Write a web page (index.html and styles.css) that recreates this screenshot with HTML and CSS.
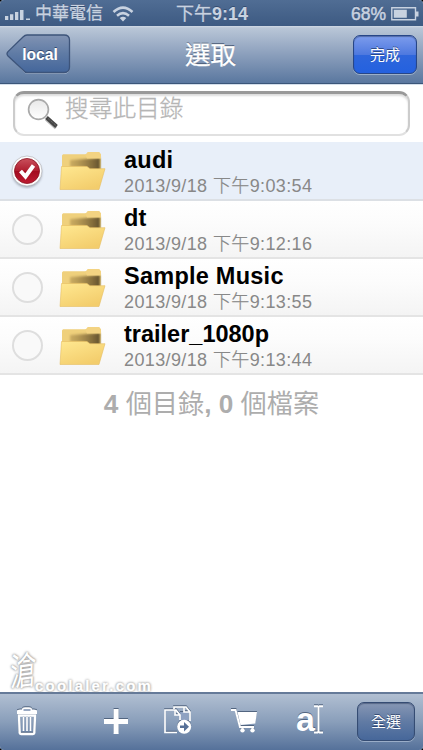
FILE: index.html
```html
<!DOCTYPE html>
<html lang="zh-Hant">
<head>
<meta charset="utf-8">
<title>選取</title>
<link rel="stylesheet" href="styles.css">
</head>
<body>
<svg class="defs" width="0" height="0">
  <defs>
    <linearGradient id="front" x1="0" y1="0" x2=".6" y2="1"><stop offset="0" stop-color="#ffe891"/><stop offset="1" stop-color="#f3cd6c"/></linearGradient>
    <linearGradient id="shade" x1="0" y1="0" x2="1" y2="0"><stop offset="0" stop-color="#a98948" stop-opacity=".5"/><stop offset="1" stop-color="#62502b"/></linearGradient>
    <linearGradient id="red" x1="0" y1="0" x2="0" y2="1"><stop offset="0" stop-color="#c9505c"/><stop offset=".48" stop-color="#b01f30"/><stop offset=".52" stop-color="#a40b20"/><stop offset="1" stop-color="#bd1c32"/></linearGradient>
    <linearGradient id="back" x1="0" y1="0" x2="0" y2="1"><stop offset="0" stop-color="#8193b3"/><stop offset=".5" stop-color="#5f7ba5"/><stop offset="1" stop-color="#44669b"/></linearGradient>
    <linearGradient id="glass" x1="0" y1="0" x2="0" y2="1"><stop offset="0" stop-color="#e8e8e8"/><stop offset="1" stop-color="#fff"/></linearGradient>
    <filter id="soft" x="-20%" y="-40%" width="140%" height="180%"><feGaussianBlur stdDeviation="1.1"/></filter>
    <symbol id="folder" viewBox="0 0 48 42">
      <path d="M3 5.5 4 4.200H27L29 2H40L42 4.500 41.500 33H3z" fill="#efd07c"/>
      <path d="M11 10 41 8V20H28L26 17H11z" fill="url(#shade)" filter="url(#soft)"/>
      <path d="M26 4.200H27L29 2H40L42 4.500V8.500H28z" fill="#f3d382"/>
      <path d="M2.500 16.500H28L31 18.700H46L40 39.500H1z" fill="url(#front)" stroke="#e5be62" stroke-width=".6"/>
    </symbol>
  </defs>
</svg>
<div class="screen">
  <header class="status">
    <div class="status-left">
      <svg width="27" height="12" viewBox="0 0 27 12"><path fill="#c8d2e0" d="M0 8h3.300v4H0zM5 6.300h3.300V12H5zM10 4h3.300v8H10zM15 2h3.500v10H15zM21 10.500h4V12h-4z"/></svg>
      <span class="carrier">中華電信</span>
      <svg class="wifi" width="22" height="16" viewBox="0 0 22 16"><g fill="none" stroke="#c8d2e0" stroke-width="2.600"><path d="M1.500 6Q11-2.600 20.500 6"/><path d="M5 9.700q6-5.200 12 0"/></g><path d="M7.700 12q3.300-2.500 6.600 0L11 15.500z" fill="#c8d2e0"/></svg>
    </div>
    <div class="clock"><span>下午</span><b>9:14</b></div>
    <div class="status-right"><span>68%</span>
      <svg width="28" height="14" viewBox="0 0 28 14"><path d="M.8.800h23.700v12H.800z" fill="none" stroke="#c8d2e0" stroke-width="1.400"/><path d="M2.800 2.800h13v8h-13zM25 4.500h2.500v5H25z" fill="#c8d2e0"/></svg>
    </div>
  </header>
  <nav class="nav">
    <a class="back">
      <svg width="66" height="42" viewBox="0 0 66 42"><path d="M17 2.500Q19 1 21 1H58Q63.500 1 63.500 6V33Q63.500 38.500 58 38.500H21Q19 38.500 17 36L3.500 22.200Q1.500 20 3.500 17.800z" fill="none" stroke="#c2cede" stroke-opacity=".55" transform="translate(0 1)"/><path d="M17 3Q19 1 21 1H58Q63.500 1 63.500 6V33Q63.500 38.500 58 38.500H21Q19 38.500 17 36L2 22Q0 19.800 2 17.600z" fill="url(#back)" stroke="#3d547a" stroke-width="1.300"/></svg>
      <span>local</span>
    </a>
    <h1>選取</h1>
    <button class="btn done">完成</button>
  </nav>
  <div class="search-wrap">
    <label class="search">
      <svg width="34" height="34" viewBox="0 0 34 34"><path d="m19 22 10 9" stroke="#bbb" stroke-width="3.500"/><path d="m19.500 20.500 10 9" stroke="#444" stroke-width="4"/><path d="m21 21.500 8 7" stroke="#777" stroke-width="1" stroke-dasharray="1 1"/><circle cx="11.500" cy="12.500" r="9.900" fill="url(#glass)" stroke="#aaa" stroke-width="1.700"/></svg>
      <span>搜尋此目錄</span>
    </label>
  </div>
  <ul class="list">
    <li class="row selected"><svg class="check" width="34" height="35" viewBox="0 0 34 35"><circle cx="17" cy="18.700" r="15" fill="#69717e" opacity=".5" filter="url(#soft)"/><circle cx="17" cy="17" r="15" fill="#fff" stroke="#b3b3b8" stroke-width=".7"/><circle cx="17" cy="17" r="12.500" fill="url(#red)" stroke="#88101f" stroke-width=".8"/><path d="m10.500 17 5 5.500 8-11" fill="none" stroke="#fff" stroke-width="4"/></svg><svg class="folder"><use href="#folder"/></svg><div class="info"><b>audi</b><span>2013/9/18 <i>下午</i>9:03:54</span></div></li>
    <li class="row"><i class="ring"></i><svg class="folder"><use href="#folder"/></svg><div class="info"><b>dt</b><span>2013/9/18 <i>下午</i>9:12:16</span></div></li>
    <li class="row"><i class="ring"></i><svg class="folder"><use href="#folder"/></svg><div class="info"><b>Sample Music</b><span>2013/9/18 <i>下午</i>9:13:55</span></div></li>
    <li class="row"><i class="ring"></i><svg class="folder"><use href="#folder"/></svg><div class="info"><b class="tight">trailer_1080p</b><span>2013/9/18 <i>下午</i>9:13:44</span></div></li>
  </ul>
  <p class="summary"><b>4</b> 個目錄<b>, 0</b> 個檔案</p>
  <footer class="toolbar">
    <svg class="icon trash" width="22" height="30" viewBox="0 0 22 30"><path d="M1 8V5Q1 3.500 4 3.500H6Q6 1.200 9 1.200H13Q16 1.200 16 3.500H18Q21 3.500 21 5V8z" fill="#fff"/><path d="M7.500 4h7" stroke="#7f93b3" stroke-width="1.600"/><path d="M3 9.500H19L18.300 27Q18.200 28 17 28H5Q3.800 28 3.700 27z" fill="none" stroke="#fff" stroke-width="2.400"/><path d="M7.500 11v14M11 11v14M14.500 11v14" stroke="#fff" stroke-width="1.700"/></svg>
    <svg class="icon plus" width="24" height="25" viewBox="0 0 24 25"><path d="M9.600 0h5v10H24v5H14.600v10h-5V15H0v-5h9.600z" fill="#fff"/></svg>
    <svg class="icon copy" width="28" height="29" viewBox="0 0 28 29"><path d="M16 6h8v8l-7 1z" fill="#8fa2c2"/><g fill="none" stroke="#fff" stroke-width="1.700"><path d="M13 26.500H1V4H12L16 9V14M11 4V9h5"/><path d="M10 3V1H22L26 6V15M20 1V6h6"/></g><circle cx="20.200" cy="20.800" r="7" fill="#fff"/><path d="M16 19.500h4v-3.500l5 4.800-5 4.700V22h-4z" fill="#577198"/></svg>
    <svg class="icon cart" width="27" height="25" viewBox="0 0 27 25"><path d="M0 2H4.500L9 19H23" fill="none" stroke="#fff" stroke-width="2"/><path d="M6.500 4H26L24.300 15.500 9.500 17z" fill="#fff"/><circle cx="11.500" cy="22.300" r="2.200" fill="#fff"/><circle cx="21.500" cy="22.300" r="2.200" fill="#fff"/></svg>
    <div class="rename"><b>a</b><svg width="11" height="29" viewBox="0 0 11 29"><path d="M1 1.200h3.500l1 1 1-1H10M1 27.500h3.500l1-1 1 1H10M5.500 2v25" fill="none" stroke="#fff" stroke-width="1.900"/></svg></div>
    <button class="btn all">全選</button>
  </footer>
  <div class="watermark"><span class="mark">滄</span><b>coolaler.com</b></div>
</div>
</body>
</html>
```
FILE: styles.css
```css
* { box-sizing: border-box; }
body { margin: 0; background: #000; font-family: "Liberation Sans", "Noto Sans CJK TC", sans-serif; }
.defs { position: absolute; }
.screen { position: relative; width: 423px; height: 750px; display: flex; flex-direction: column; overflow: hidden; background: #fff; border-radius: 4px; }

.status { height: 26px; flex: none; display: grid; grid-template-columns: 1fr auto 1fr; align-items: center; padding: 0 4px 0 5px; color: #c8d2e0; background: linear-gradient(#506d94, #3d5a82); text-shadow: 0 -1px 0 #354d70; font-size: 17px; line-height: 26px; }
.status-left, .status-right { display: flex; align-items: center; }
.carrier { font-size: 17px; margin: 1px 0 0 3px; -webkit-text-stroke: .3px #c8d2e0; }
.wifi { margin-left: 9px; }
.clock { font-size: 18px; white-space: nowrap; }
.clock span { -webkit-text-stroke: .3px #c8d2e0; }
.clock b { font-size: 18px; }
.status-right { justify-content: flex-end; gap: 5px; }
.status-right span { font-size: 17.500px; -webkit-text-stroke: .5px #c8d2e0; }

.nav { height: 58px; flex: none; display: grid; grid-template-columns: 1fr auto 1fr; align-items: center; padding: 0 6px; background: linear-gradient(#d0d9e5 0, #b9c6d7 2px, #8b9fbc 50%, #5a779f 100%); border-bottom: 1px solid #3b5679; }
.nav h1 { margin: 0 2px 0 0; color: #fff; font-weight: 400; font-size: 25.500px; line-height: 36px; text-shadow: 0 -1px 0 #4a5b75; -webkit-text-stroke: .3px #fff; }
.back { display: grid; width: 66px; height: 42px; }
.back > * { grid-area: 1 / 1; }
.back span { align-self: center; justify-self: center; margin: 1px 0 0 2px; color: #fff; font-weight: 700; font-size: 15.700px; text-shadow: 0 -1px 0 #35496c; }
.btn { padding: 0; border: 1px solid #354c73; border-radius: 7px; color: #fff; font: 15px/20px "Liberation Sans", "Noto Sans CJK TC", sans-serif; text-shadow: 0 -1px 0 rgba(20,40,80,.6); box-shadow: 0 1px 0 rgba(220,230,245,.45), inset 0 1px 1px rgba(20,35,70,.4); }
.done { justify-self: end; width: 64px; height: 39px; border-color: #274687; background: linear-gradient(#7d9cec, #4e79df 50%, #2e66dc 52%, #2461df); }

.search-wrap { height: 58px; flex: none; padding: 6px 13px; border-top: 1px solid #d5dfeb; background: #fff; }
.search { display: flex; width: 397px; height: 45px; padding-left: 14px; border: 2px solid #ccc; border-top: 3px solid #999; border-bottom-color: #e1e1e1; border-radius: 11px; box-shadow: inset 0 2px 2px #ddd; }
.search svg { margin-top: 3px; margin-left: -2px; }
.search span { margin-left: 4px; color: #b5b5b5; font-size: 23.700px; line-height: 30px; font-weight: 300; -webkit-text-stroke: .3px #b5b5b5; }

.list { margin: 0; padding: 0; list-style: none; }
.row { height: 58px; display: flex; align-items: center; padding-left: 10px; background: linear-gradient(#fff, #fcfcfc 40%, #f4f4f4); border-bottom: 2px solid #e4e4e4; }
.row.selected { height: 59px; background: #e8eff9; border-bottom-color: #dce0e5; }
.row:last-child { height: 58px; }
.ring { width: 31px; height: 31px; margin-left: 2px; border: 2px solid #dedede; border-radius: 50%; flex: none; background: #f9f9f9; }
.check { flex: none; margin: 2px -1px 0 0; }
.folder { width: 48px; height: 42px; margin: 1px 0 0 16px; flex: none; }
.info { display: flex; flex-direction: column; margin-left: 17px; padding-top: 6px; white-space: nowrap; }
.info b { color: #000; font-size: 23.500px; line-height: 25px; letter-spacing: .25px; }
.info b.tight { letter-spacing: 0; }
.info span { color: #888; font-size: 18px; line-height: 27px; letter-spacing: .38px; }
.info i { font-style: normal; font-weight: 300; -webkit-text-stroke: .25px #888; }
.summary { margin: 9px 0 0; text-align: center; color: #adadad; font-size: 26.200px; line-height: 40px; }

.toolbar { height: 58px; flex: none; margin-top: auto; display: flex; align-items: center; padding: 0 8px 1px 16px; border-top: 2px solid #657a99; background: linear-gradient(#b1bfd2, #899eba 50%, #55719a); }
.icon, .rename svg { filter: drop-shadow(0 -1px 0 #526580); }
.trash { margin-bottom: 2px; }
.plus { margin-left: 66px; }
.copy { margin: 0 0 3px 36px; }
.cart { margin: 0 0 2px 39px; }
.rename { display: flex; align-items: center; margin-left: 38px; margin-bottom: 4px; color: #fff; }
.rename b { font-size: 34px; line-height: 29px; text-shadow: 0 -1px 0 #526580; margin-right: -2px; }
.all { margin-left: auto; width: 58px; height: 39px; background: linear-gradient(#8797b4, #617ba4 50%, #46679a); }

.watermark { position: absolute; left: 4px; top: 645px; display: flex; align-items: flex-end; color: #fff; text-shadow: 0 0 2px #999, 0 0 3px #888; }
.mark { width: 31px; font: italic 400 33px/48px "Noto Sans CJK TC", sans-serif; transform: rotate(-8deg) scale(.8, 1.15); }
.watermark b { font: 700 15px/14px "Liberation Sans", sans-serif; letter-spacing: 2.200px; -webkit-text-stroke: .3px #fff; }
```
